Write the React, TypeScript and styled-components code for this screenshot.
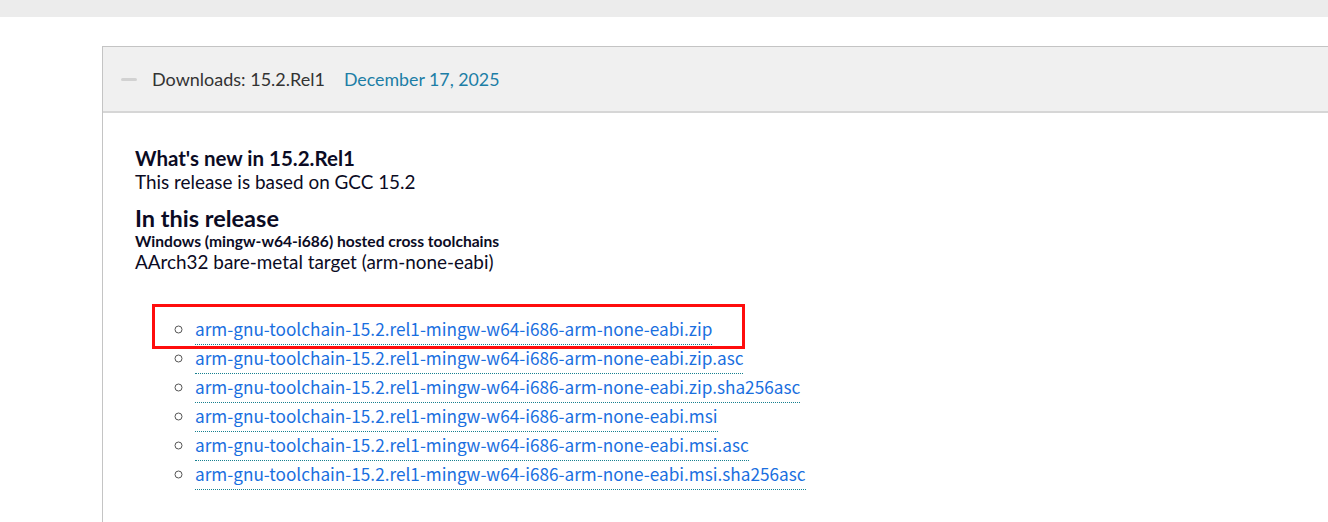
import styled, { createGlobalStyle } from "styled-components";

const GlobalStyle = createGlobalStyle`
  html, body {
    margin: 0;
    padding: 0;
    background: #ffffff;
  }
  body {
    font-family: Lato, "Noto Sans", sans-serif;
    color: #0b0b24;
  }
`;

const FILES = [
  "arm-gnu-toolchain-15.2.rel1-mingw-w64-i686-arm-none-eabi.zip",
  "arm-gnu-toolchain-15.2.rel1-mingw-w64-i686-arm-none-eabi.zip.asc",
  "arm-gnu-toolchain-15.2.rel1-mingw-w64-i686-arm-none-eabi.zip.sha256asc",
  "arm-gnu-toolchain-15.2.rel1-mingw-w64-i686-arm-none-eabi.msi",
  "arm-gnu-toolchain-15.2.rel1-mingw-w64-i686-arm-none-eabi.msi.asc",
  "arm-gnu-toolchain-15.2.rel1-mingw-w64-i686-arm-none-eabi.msi.sha256asc",
];

const App = () => {
  return (
    <>
      <GlobalStyle />
      <Page>
        <TopBar />
        <Main>
          <Panel>
            <PanelHeader>
              <Collapse />
              <HeaderTitle>Downloads: 15.2.Rel1</HeaderTitle>
              <HeaderDate>December 17, 2025</HeaderDate>
            </PanelHeader>
            <PanelBody>
              <SubTitle>What's new in 15.2.Rel1</SubTitle>
              <Text>This release is based on GCC 15.2</Text>
              <Title>In this release</Title>
              <HostTitle>Windows (mingw-w64-i686) hosted cross toolchains</HostTitle>
              <Text>AArch32 bare-metal target (arm-none-eabi)</Text>
              <FileList>
                {FILES.map((file, i) => (
                  <FileItem key={file}>
                    <FileLink href="#">{file}</FileLink>
                    {i === 0 && <Highlight />}
                  </FileItem>
                ))}
              </FileList>
            </PanelBody>
          </Panel>
        </Main>
      </Page>
    </>
  );
};

export default App;

const Page = styled.div`
  width: 1328px;
  height: 522px;
  overflow: hidden;
`;

const TopBar = styled.div`
  height: 17px;
  background: #ececec;
`;

const Main = styled.div`
  padding: 29px 0 0 102px;
`;

const Panel = styled.section`
  border-left: 1px solid #c4c4c4;
  border-top: 1px solid #c4c4c4;
  height: 480px;
`;

const PanelHeader = styled.div`
  display: flex;
  align-items: center;
  height: 64px;
  background: #f0f0f0;
  border-bottom: 2px solid #d6d6d6;
  padding-left: 18px;
  font-size: 18px;
`;

const Collapse = styled.span`
  display: block;
  width: 16px;
  height: 3px;
  border-radius: 2px;
  background: #d2d2d2;
  margin-right: 15px;
`;

const HeaderTitle = styled.span`
  color: #333333;
  margin-right: 19px;
`;

const HeaderDate = styled.span`
  color: #1c7ea6;
  font-size: 17.8px;
`;

const PanelBody = styled.div`
  padding: 33px 0 0 32px;
`;

const SubTitle = styled.h3`
  margin: 0;
  font-size: 20.5px;
  font-weight: 700;
  line-height: 24px;
  color: #0b0b24;
`;

const Text = styled.p`
  margin: 0;
  font-size: 18.9px;
  line-height: 24px;
  color: #0b0b24;
`;

const Title = styled.h2`
  margin: 0;
  padding-top: 10px;
  font-size: 23.5px;
  font-weight: 700;
  line-height: 28px;
  color: #0b0b24;
`;

const HostTitle = styled.h4`
  margin: 0;
  font-size: 15.6px;
  font-weight: 700;
  line-height: 18px;
  color: #0b0b24;
`;

const FileList = styled.ul`
  list-style: circle;
  margin: 40px 0 0;
  padding-left: 60px;
  color: #555555;
`;

const FileItem = styled.li`
  position: relative;
  height: 29px;
  line-height: 29px;
  font-size: 17.2px;
  font-family: "Noto Sans CJK SC", "Noto Sans", sans-serif;
`;

const FileLink = styled.a`
  color: #1a6fe0;
  text-decoration: none;
  border-bottom: 1px dotted #17808f;
  padding-bottom: 3px;
`;

const Highlight = styled.span`
  position: absolute;
  left: -43px;
  top: -10px;
  width: 587px;
  height: 39px;
  border: 3px solid #ff0d0d;
`;
